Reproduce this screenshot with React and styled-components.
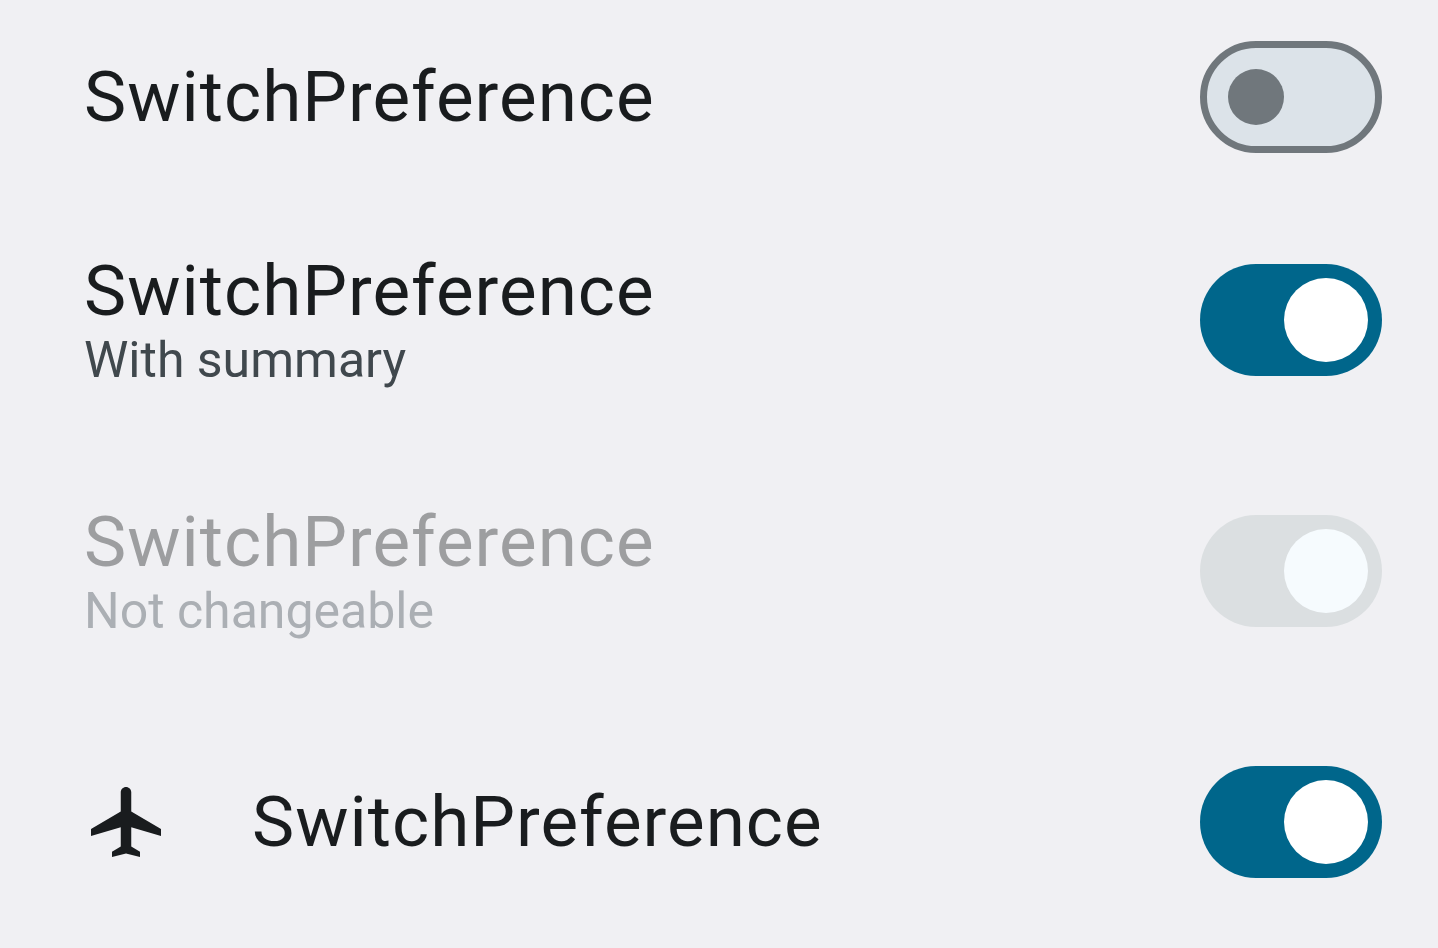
import React from "react";
import styled, { createGlobalStyle } from "styled-components";

const GlobalStyle = createGlobalStyle`
  *, *::before, *::after { box-sizing: border-box; }
  body { margin: 0; background: #f0f0f3; font-family: Roboto, sans-serif; }
`;

const PreferenceList = styled.main`
  display: flex;
  flex-direction: column;
`;

const PreferenceRow = styled.label`
  display: flex;
  align-items: center;
  min-height: ${(p) => (p.$compact ? 194 : 251)}px;
  padding: 0 56px 0 84px;
`;

const IconFrame = styled.span`
  display: flex;
  width: 168px;
`;

const TextColumn = styled.span`
  display: flex;
  flex: 1;
  flex-direction: column;
`;

const Title = styled.span`
  color: ${(p) => (p.$disabled ? "#9d9ea0" : "#191c1e")};
  font-size: 71px;
  line-height: 82px;
  letter-spacing: 1px;
`;

const Summary = styled.span`
  color: ${(p) => (p.$disabled ? "#abafb4" : "#40484d")};
  font-size: 50px;
  line-height: 57px;
`;

const Switch = styled.input`
  appearance: none;
  display: flex;
  flex: none;
  align-items: center;
  width: 182px;
  height: 112px;
  margin: 0;
  padding: 0 21px;
  border: 7px solid #70777c;
  border-radius: 56px;
  background: #dce3e9;

  &::before {
    content: "";
    width: 56px;
    height: 56px;
    border-radius: 50%;
    background: #70777c;
  }

  &:checked {
    justify-content: flex-end;
    padding: 0 14px;
    border: 0;
    background: #00668b;
  }

  &:checked::before {
    width: 84px;
    height: 84px;
    background: #ffffff;
  }

  &:disabled { background: #dbdfe1; }
  &:disabled::before { background: #f6fbfe; }
`;

function AirplaneIcon() {
  return (
    <svg width="84" height="84" viewBox="0 0 24 24" fill="#191c1e" aria-hidden="true">
      <path d="M22 16v-2l-8.500-5V3.500c0-.83-.67-1.500-1.500-1.500s-1.500.67-1.500 1.500V9L2 14v2l8.500-2.500V19L8 20.500V22l4-1 4 1v-1.500L13.500 19v-5.500L22 16z" />
    </svg>
  );
}

function Preference({ title, summary, icon, checked, disabled, compact }) {
  return (
    <PreferenceRow $compact={compact}>
      {icon && <IconFrame>{icon}</IconFrame>}
      <TextColumn>
        <Title $disabled={disabled}>{title}</Title>
        {summary && <Summary $disabled={disabled}>{summary}</Summary>}
      </TextColumn>
      <Switch type="checkbox" role="switch" defaultChecked={checked} disabled={disabled} />
    </PreferenceRow>
  );
}

export default function App() {
  return (
    <>
      <GlobalStyle />
      <PreferenceList>
        <Preference title="SwitchPreference" compact />
        <Preference title="SwitchPreference" summary="With summary" checked />
        <Preference title="SwitchPreference" summary="Not changeable" checked disabled />
        <Preference title="SwitchPreference" icon={<AirplaneIcon />} checked />
      </PreferenceList>
    </>
  );
}
